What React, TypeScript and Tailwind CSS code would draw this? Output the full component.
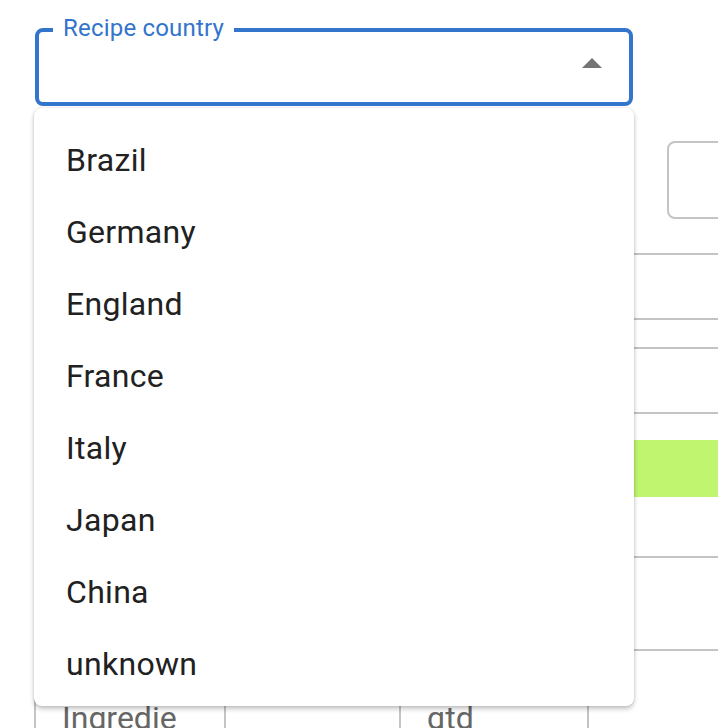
import React from "react";

const countries = ["Brazil", "Germany", "England", "France", "Italy", "Japan", "China", "unknown"];

function Line({ h }: { h: string }) {
  return <div className={`border-t-2 border-[#c4c4c4] ${h}`} />;
}

export default function App() {
  return (
    <div className="relative w-[718px] h-[728px] overflow-hidden bg-white font-['Roboto',sans-serif]">
      {/* page behind the open menu */}
      <div className="pt-[28px] pl-[35px]">
        <div className="relative w-[598px] h-[78px] rounded-[8px] border-4 border-[#3374cc]">
          <span className="absolute left-[14px] top-[-16px] bg-white px-[10px] text-[24px] leading-6 tracking-[0.2px] text-[#3374cc]">
            Recipe country
          </span>
          <svg className="absolute left-[543px] top-[26px]" width="20" height="10" viewBox="0 0 20 10">
            <polygon points="0,10 10,0 20,10" fill="#757575" />
          </svg>
        </div>
      </div>

      <div className="mt-[35px] pl-[667px]">
        <div className="w-[120px] h-[78px] rounded-[8px] border-2 border-[#c4c4c4]" />
      </div>

      <div className="mt-[34px] ml-[36px]">
        <Line h="h-[65px]" />
        <Line h="h-[29px]" />
        <Line h="h-[65px]" />
        <Line h="h-[28px]" />
        <div className="h-[57px] bg-[#bff56f]" />
        <div className="h-[59px]" />
        <Line h="h-[93px]" />
        <Line h="h-[41px]" />
      </div>

      <div className="ml-[34px] grid grid-cols-[190px_175px_190px] w-[557px] text-[32px] leading-[48px] text-[#666]">
        <div className="border-l-2 border-[#c4c4c4] pl-[26px] pt-[4px]">Ingredie</div>
        <div className="border-l-2 border-[#c4c4c4]" />
        <div className="border-l-2 border-r-2 border-[#c4c4c4] pl-[26px] pt-[4px]">qtd</div>
      </div>

      {/* open menu */}
      <div className="absolute left-[34px] top-[108px] w-[600px] h-[598px] overflow-hidden rounded-[8px] bg-white shadow-[0_3px_5px_rgba(0,0,0,0.22),0_0_3px_rgba(0,0,0,0.12)]">
        <ul className="py-[16px]">
          {countries.map((c) => (
            <li key={c} className="h-[72px] px-[32px] text-[32px] leading-[72px] tracking-[0.3px] text-[#212121]">
              {c}
            </li>
          ))}
        </ul>
      </div>
    </div>
  );
}
